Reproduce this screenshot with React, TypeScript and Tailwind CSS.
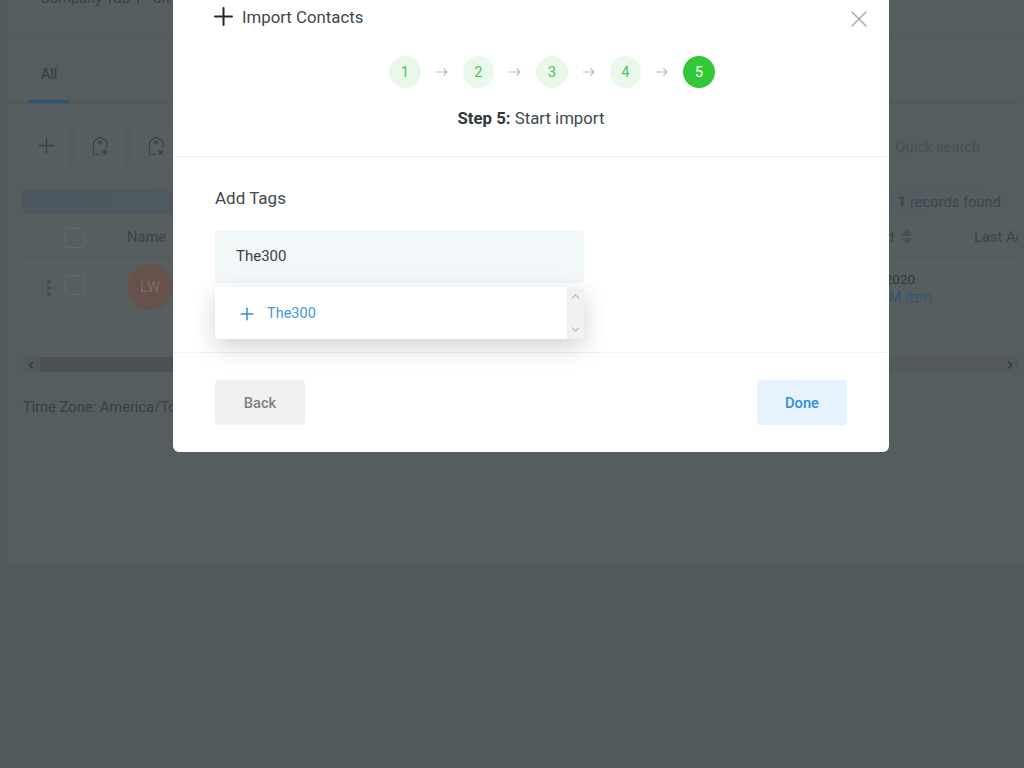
import React from 'react';
import { X, ChevronUp, ChevronDown, ChevronLeft, ChevronRight, Plus } from 'lucide-react';

const TagIcon = ({ mark }: { mark: 'plus' | 'x' }) => (
  <svg width="16" height="20" viewBox="0 0 16 20" fill="none" stroke="#3b4245" strokeWidth="1.2">
    <path d="M8 1 L14 5 Q15 6 15 7 V12 M8 18.5 H3 Q1.5 18.5 1.5 17 V7 Q1.5 6 2.5 5 L8 1" />
    <circle cx="8" cy="6.5" r="1.4" />
    {mark === 'plus' ? (
      <path d="M12.5 13 V19 M9.5 16 H15.5" strokeWidth="1.4" />
    ) : (
      <path d="M10.5 14 L15 18.5 M15 14 L10.5 18.5" strokeWidth="1.5" />
    )}
  </svg>
);

const SortIcon = () => (
  <svg width="12" height="16" viewBox="0 0 12 16" fill="#4a5154">
    <path d="M6 0 L12 7 H0 Z M0 9 H12 L6 16 Z" />
  </svg>
);

const Arrow = () => (
  <svg width="12" height="10" viewBox="0 0 12 10" fill="none" stroke="#b9bcbe" strokeWidth="1.2">
    <path d="M0 5 H11 M7.5 1.5 L11 5 L7.5 8.5" />
  </svg>
);

const Step = ({ n, active }: { n: number; active?: boolean }) => (
  <div
    className={
      active
        ? 'w-[31.5px] h-[31.5px] rounded-full flex items-center justify-center text-[14.7px] bg-[#34c738] text-white'
        : 'w-[31.5px] h-[31.5px] rounded-full flex items-center justify-center text-[14.7px] bg-[#e9f8ea] text-[#4fc454]'
    }
  >
    {n}
  </div>
);

const Background = () => (
  <div className="ml-[8px] h-[565px] bg-[#565d5f] text-[#3a4144] overflow-hidden">
    <div className="mr-[6px]">
      <div className="h-[48px] pl-[32px] -mt-[10px] text-[14.7px] leading-[16px] border-b border-[#52595b]">
        Company Tab 1 · Sh
      </div>
      <div className="h-[66px] px-[20px] border-b border-[#50575a] flex">
        <div className="w-[42px] h-[65px] pt-[10px] flex items-center justify-center border-b-[3px] border-[#2f5375] text-[14.7px] text-[#353c3f]">
          All
        </div>
      </div>
      <div className="mt-[23px] pl-[15px] flex gap-[6px]">
        <div className="w-[46px] h-[40px] rounded bg-[#585f61] flex items-center justify-center">
          <Plus size={27} strokeWidth={1.2} color="#3b4245" className="-mt-[3px]" />
        </div>
        <div className="w-[50px] h-[40px] rounded bg-[#585f61] flex items-center justify-center">
          <span className="-mt-[2px]">
            <TagIcon mark="plus" />
          </span>
        </div>
        <div className="w-[50px] h-[40px] rounded bg-[#585f61] flex items-center justify-center">
          <span className="-mt-[2px]">
            <TagIcon mark="x" />
          </span>
        </div>
        <div className="ml-auto mr-[38px] h-[40px] flex items-center text-[14.7px] text-[#485053]">Quick search</div>
      </div>
      <div className="mt-[23px] ml-[15px] h-[24px] bg-gradient-to-r from-[#4e5860] to-[#555d61] flex items-center justify-end pr-[17px] text-[14.7px] text-[#3f474a]">
        <span className="font-bold mr-[4px]">1</span>records found
      </div>
      <div className="ml-[15px] h-[44px] bg-[#575e60] border-b border-[#51585a] flex items-center text-[14.7px] text-[#3c4447] overflow-hidden whitespace-nowrap">
        <div className="w-[20px] h-[20px] ml-[42px] mt-[4px] border border-[#62696b] rounded-[2px]"></div>
        <span className="ml-[42px] mt-[4px]">Name</span>
        <div className="ml-auto mt-[4px] w-[175px] shrink-0 flex items-center">
          <span className="w-[50px] text-right shrink-0">Created</span>
          <span className="ml-[8px] shrink-0">
            <SortIcon />
          </span>
          <span className="ml-[61px] shrink-0">Last Activity</span>
        </div>
      </div>
      <div className="ml-[15px] h-[97px] bg-[#575e60] flex text-[#3c4447]">
        <div className="w-[42px] flex justify-center pt-[22px]">
          <div className="flex flex-col gap-[2px] pl-[9px]">
            <div className="w-[4px] h-[4px] rounded-full bg-[#454c4e]"></div>
            <div className="w-[4px] h-[4px] rounded-full bg-[#454c4e]"></div>
            <div className="w-[4px] h-[4px] rounded-full bg-[#454c4e]"></div>
          </div>
        </div>
        <div className="w-[20px] h-[20px] mt-[17px] border border-[#62696b] rounded-[2px]"></div>
        <div className="ml-[42px] mt-[6px] w-[46px] h-[46px] rounded-full bg-[#64524b] flex items-center justify-center text-[14.7px] text-[#7c6d67]">
          LW
        </div>
        <div className="ml-auto mr-[86px] mt-[12px] leading-[18px] text-right">
          <div className="text-[13.5px] pr-[17px] text-[#31383b]">2020</div>
          <div className="text-[14.7px] text-[#2f5375]">
            M <span className="text-[10.7px]">(EDT)</span>
          </div>
        </div>
      </div>
      <div className="mt-[2px] ml-[15px] h-[15px] flex items-center pl-[2px] pr-[2px] bg-[#54595c]">
        <ChevronLeft size={12} strokeWidth={3} color="#31383b" />
        <div className="ml-[3px] w-[500px] h-[15px] bg-[#4b5153]"></div>
        <ChevronRight size={12} strokeWidth={3} color="#31383b" className="ml-auto" />
      </div>
      <div className="mt-[27px] ml-[15px] text-[14.7px] leading-[16px] text-[#3a4144]">Time Zone: America/Toronto</div>
    </div>
  </div>
);

export default function App() {
  return (
    <div className="relative w-[1024px] h-[768px] bg-[#52595b] overflow-hidden font-['Roboto',sans-serif]">
      <Background />
      <div className="absolute left-[173px] top-[-30px] w-[716px] h-[482px] bg-white rounded-b-[6px] flex flex-col text-[#3a4246]">
        <div className="h-[187px] border-b border-[#eef2f6] flex flex-col shrink-0">
          <div className="mt-[36px] ml-[36px] mr-[16px] flex items-center h-[24px]">
            <Plus size={29} strokeWidth={1.7} color="#1f2a30" className="-mt-[3px]" />
            <span className="ml-[4px] text-[16.8px] text-[#40484c]">Import Contacts</span>
            <X size={28} strokeWidth={1.3} color="#a9aeb1" className="ml-auto mt-[2px]" />
          </div>
          <div className="mt-[26px] flex items-center justify-center gap-[15px] pl-[42px]">
            <Step n={1} />
            <Arrow />
            <Step n={2} />
            <Arrow />
            <Step n={3} />
            <Arrow />
            <Step n={4} />
            <Arrow />
            <Step n={5} active />
          </div>
          <div className="mt-[18px] text-center text-[16.8px] leading-[24px] text-[#40484c]">
            <span className="font-bold text-[#2f373b]">Step 5:</span> Start import
          </div>
        </div>
        <div className="h-[196px] border-b border-[#eef2f6] shrink-0 px-[42px] pt-[30px] relative">
          <div className="text-[17px] leading-[22px] text-[#40484c]">Add Tags</div>
          <div className="mt-[21px] w-[369px] h-[53px] rounded-[4px] bg-[#f2f7fa] flex items-center pl-[21px] text-[15px] text-[#3a3f42]">
            The300
          </div>
          <div className="absolute left-[42px] top-[130px] w-[369px] h-[52px] rounded-[4px] bg-white shadow-[0_8px_24px_rgba(0,0,0,0.18)] flex overflow-hidden">
            <div className="flex-1 flex items-center pl-[21.5px] pt-[1px] text-[14.5px] text-[#3f97dc]">
              <Plus size={20} strokeWidth={1.8} color="#2e8fdc" />
              <span className="ml-[10.5px]">The300</span>
            </div>
            <div className="w-[17px] bg-[#f1f1f1] flex flex-col items-center justify-between py-[3px]">
              <ChevronUp size={13} strokeWidth={2} color="#b5b5b5" />
              <ChevronDown size={13} strokeWidth={2} color="#b5b5b5" />
            </div>
          </div>
        </div>
        <div className="flex-1 px-[42px] flex items-start justify-between pt-[27px]">
          <button className="w-[90px] h-[45px] pt-[1px] rounded-[4px] bg-[#f0f0f0] text-[14.7px] font-medium text-[#7b8387]">Back</button>
          <button className="w-[90px] h-[45px] pt-[1px] rounded-[4px] bg-[#e6f3fe] text-[14.7px] font-medium text-[#2e8fdc]">Done</button>
        </div>
      </div>
    </div>
  );
}
